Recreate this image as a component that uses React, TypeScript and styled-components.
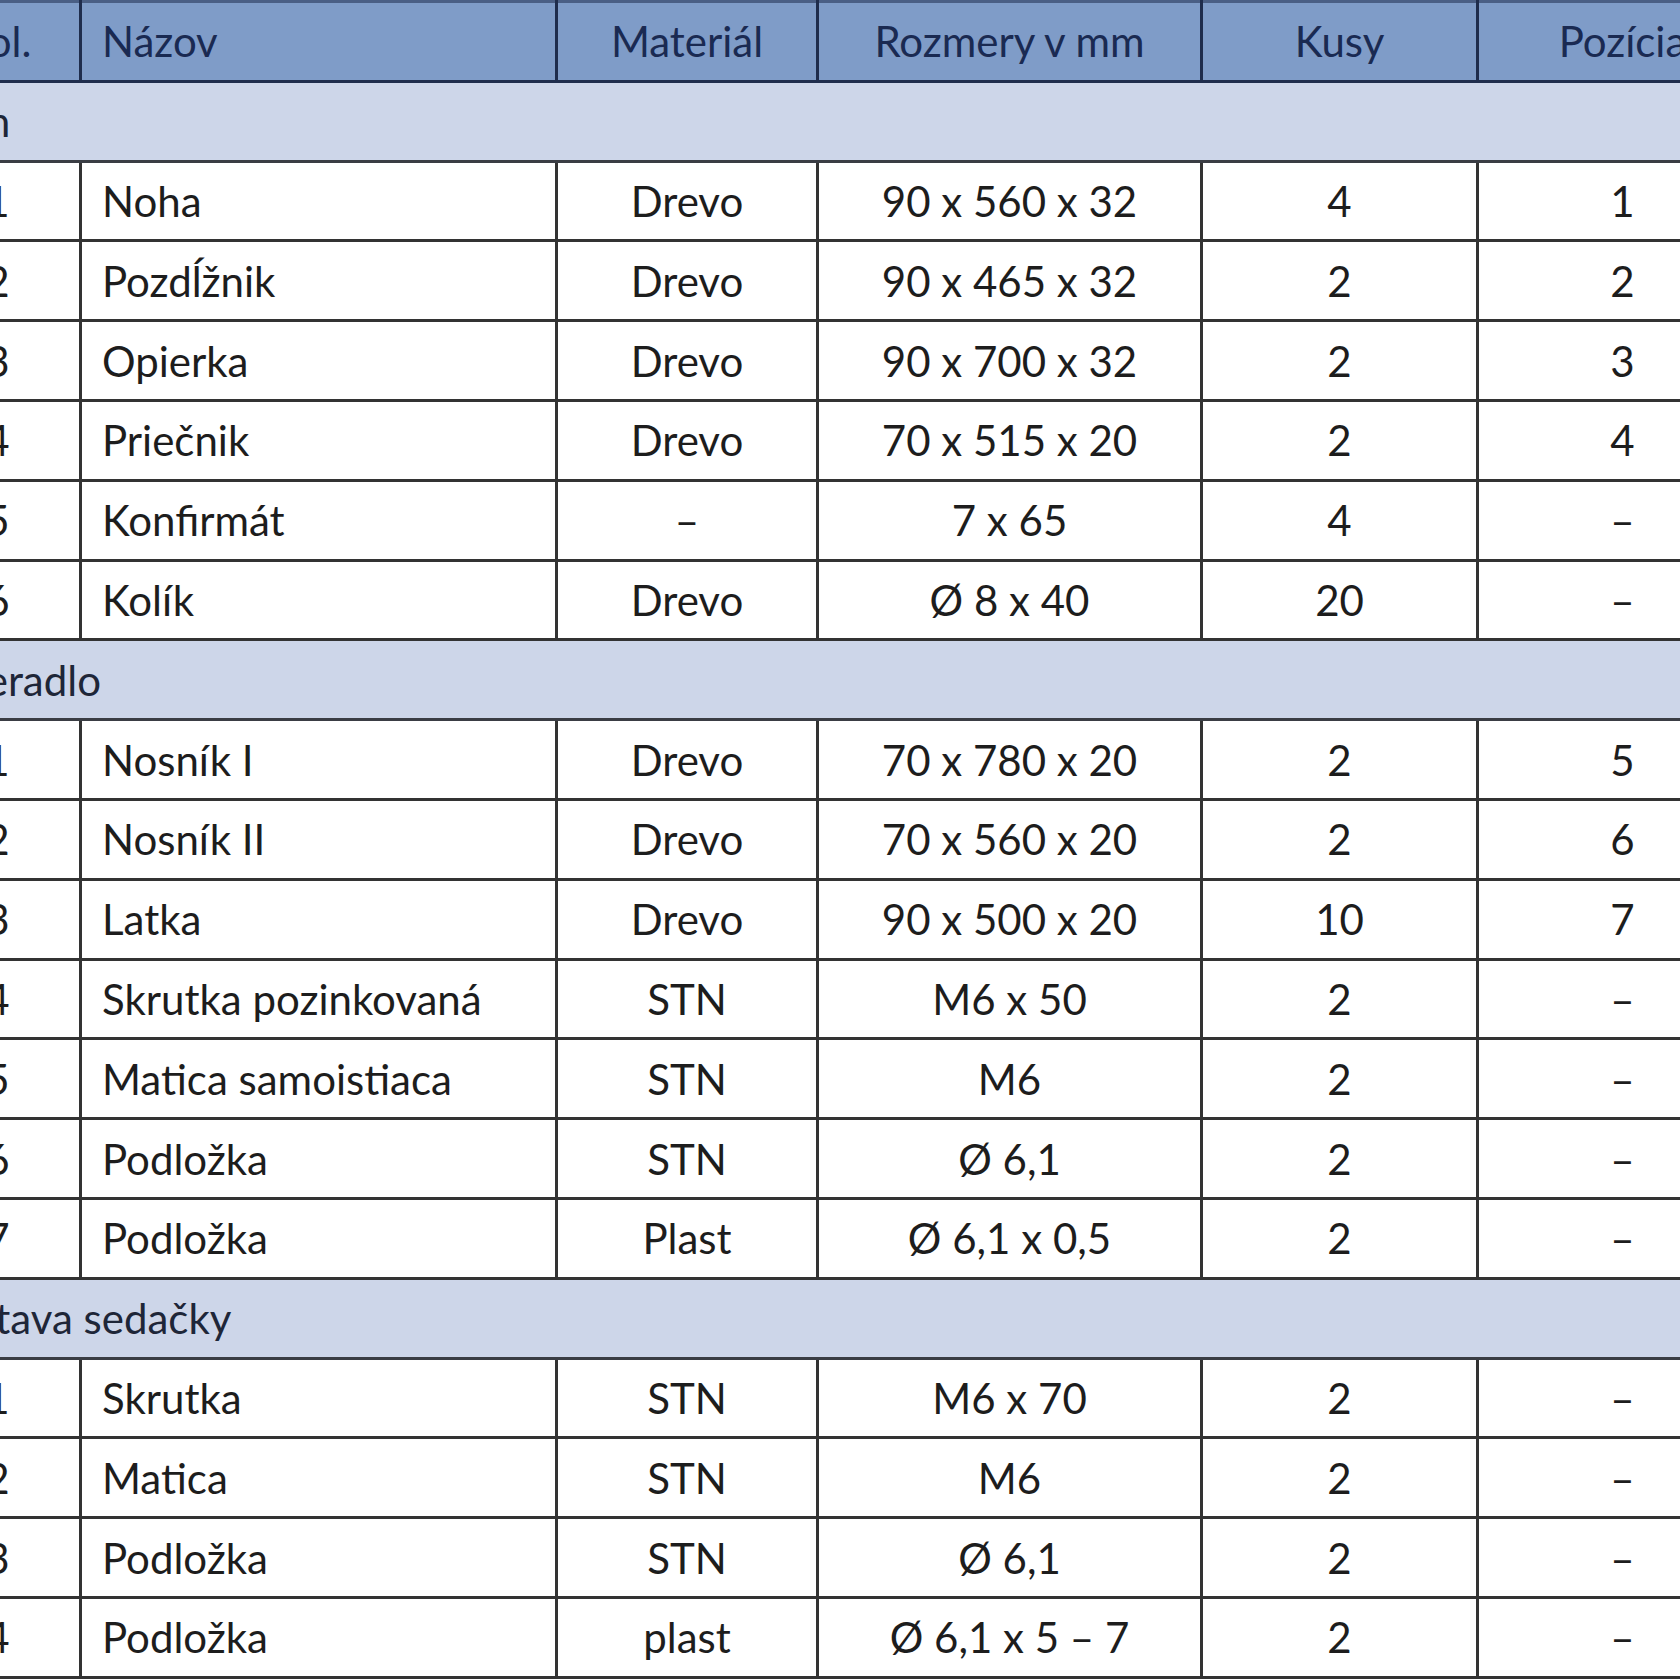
import React from "react";
import styled, { createGlobalStyle } from "styled-components";

const Global = createGlobalStyle`
  html, body { margin: 0; padding: 0; background: #ffffff; }
  body { font-family: "Lato", "Liberation Sans", sans-serif; }
`;

const Viewport = styled.div`
  width: 1680px;
  height: 1680px;
  overflow: hidden;
  background: #ffffff;
`;

const Table = styled.table`
  margin-left: -87px;
  width: 1853px;
  table-layout: fixed;
  border-collapse: collapse;
  font-family: "Lato", "Liberation Sans", sans-serif;
  font-size: 42px;
  color: #1d1d1d;
`;

const HeadRow = styled.tr`
  height: 79.8px;
  background: #7f9cc8;
`;

const HeadCell = styled.th<{ $align?: "left" | "center" }>`
  border: 3px solid #1f2d4d;
  border-top-color: #4a5f85;
  font-weight: 400;
  color: #1a2a52;
  text-align: ${(p) => p.$align ?? "center"};
  padding: 0 0 0 ${(p) => (p.$align === "left" ? "20px" : "0")};
  white-space: nowrap;
  overflow: hidden;
  vertical-align: middle;
`;

const SectionRow = styled.tr`
  height: 79.8px;
  background: #cdd6e9;
`;

const SectionCell = styled.td`
  border: 3px solid #3a3d44;
  text-align: left;
  padding: 0 0 0 13px;
  color: #1e2638;
  white-space: nowrap;
  vertical-align: middle;
`;

const BodyRow = styled.tr`
  height: 79.8px;
  background: #ffffff;
`;

const Cell = styled.td<{ $align?: "left" | "center" }>`
  border: 3px solid #333333;
  text-align: ${(p) => p.$align ?? "center"};
  padding: 0 0 0 ${(p) => (p.$align === "left" ? "20px" : "0")};
  white-space: nowrap;
  overflow: hidden;
  vertical-align: middle;
`;

type Item = [string, string, string, string, string, string];
type Section = { title: string; items: Item[] };

const sections: Section[] = [
  {
    title: "Rám",
    items: [
      ["1", "Noha", "Drevo", "90 x 560 x 32", "4", "1"],
      ["2", "Pozdĺžnik", "Drevo", "90 x 465 x 32", "2", "2"],
      ["3", "Opierka", "Drevo", "90 x 700 x 32", "2", "3"],
      ["4", "Priečnik", "Drevo", "70 x 515 x 20", "2", "4"],
      ["5", "Konfirmát", "–", "7 x 65", "4", "–"],
      ["6", "Kolík", "Drevo", "Ø 8 x 40", "20", "–"],
    ],
  },
  {
    title: "Operadlo",
    items: [
      ["1", "Nosník I", "Drevo", "70 x 780 x 20", "2", "5"],
      ["2", "Nosník II", "Drevo", "70 x 560 x 20", "2", "6"],
      ["3", "Latka", "Drevo", "90 x 500 x 20", "10", "7"],
      ["4", "Skrutka pozinkovaná", "STN", "M6 x 50", "2", "–"],
      ["5", "Matica samoistiaca", "STN", "M6", "2", "–"],
      ["6", "Podložka", "STN", "Ø 6,1", "2", "–"],
      ["7", "Podložka", "Plast", "Ø 6,1 x 0,5", "2", "–"],
    ],
  },
  {
    title: "Zostava sedačky",
    items: [
      ["1", "Skrutka", "STN", "M6 x 70", "2", "–"],
      ["2", "Matica", "STN", "M6", "2", "–"],
      ["3", "Podložka", "STN", "Ø 6,1", "2", "–"],
      ["4", "Podložka", "plast", "Ø 6,1 x 5 – 7", "2", "–"],
    ],
  },
];

const widths = [166, 476, 261, 384, 276, 290];

export default function App() {
  return (
    <>
      <Global />
      <Viewport>
        <Table>
          <colgroup>
            {widths.map((w, i) => (
              <col key={i} style={{ width: w }} />
            ))}
          </colgroup>
          <thead>
            <HeadRow>
              <HeadCell>Pol.</HeadCell>
              <HeadCell $align="left">Názov</HeadCell>
              <HeadCell>Materiál</HeadCell>
              <HeadCell>Rozmery v mm</HeadCell>
              <HeadCell>Kusy</HeadCell>
              <HeadCell>Pozícia</HeadCell>
            </HeadRow>
          </thead>
          <tbody>
            {sections.map((s) => (
              <React.Fragment key={s.title}>
                <SectionRow>
                  <SectionCell colSpan={6}>{s.title}</SectionCell>
                </SectionRow>
                {s.items.map((it, i) => (
                  <BodyRow key={i}>
                    <Cell>{it[0]}</Cell>
                    <Cell $align="left">{it[1]}</Cell>
                    <Cell>{it[2]}</Cell>
                    <Cell>{it[3]}</Cell>
                    <Cell>{it[4]}</Cell>
                    <Cell>{it[5]}</Cell>
                  </BodyRow>
                ))}
              </React.Fragment>
            ))}
          </tbody>
        </Table>
      </Viewport>
    </>
  );
}
